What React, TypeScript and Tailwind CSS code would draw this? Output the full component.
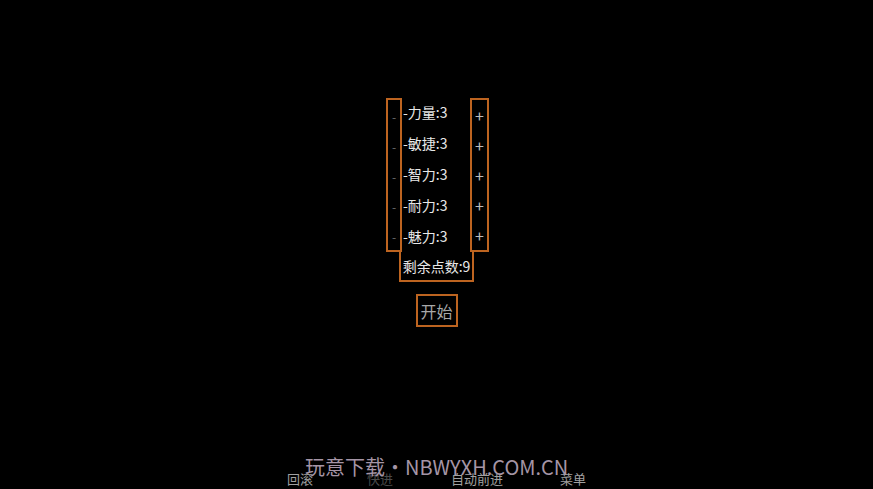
import React from "react";

const stats = ["力量", "敏捷", "智力", "耐力", "魅力"];

export default function App() {
  const font = { fontFamily: '"Noto Sans CJK SC", "Noto Sans", sans-serif' };
  return (
    <div
      className="relative h-[489px] w-[873px] overflow-hidden bg-black flex flex-col items-center"
      style={font}
    >
      {/* attribute panel */}
      <div className="mt-[98px] ml-[2px] w-[103px] flex flex-col">
        <div className="flex h-[154px]">
          <div className="w-[16px] h-full border-2 border-[#bd6420] flex flex-col">
            {stats.map((s) => (
              <div
                key={s}
                className="h-[30px] flex items-center justify-center text-[12px] leading-none text-[#6e6e6e] pt-[3px]"
              >
                -
              </div>
            ))}
          </div>
          <div className="w-[68px] h-full flex flex-col -mt-[1px]">
            {stats.map((s) => (
              <div
                key={s}
                className="h-[31px] flex items-center text-[14px] leading-none text-[#e8e8e8] pl-[1px]"
              >
                -{s}:3
              </div>
            ))}
          </div>
          <div className="w-[19px] h-full border-2 border-[#bd6420] flex flex-col">
            {stats.map((s) => (
              <div
                key={s}
                className="h-[30px] flex items-center justify-center text-[16px] leading-none text-[#bdbdbd]"
              >
                +
              </div>
            ))}
          </div>
        </div>
        <div className="ml-[13px] w-[75px] h-[30px] border-2 border-t-0 border-[#bd6420] flex items-center justify-center text-[14px] leading-none text-[#e8e8e8]">
          剩余点数:9
        </div>
      </div>

      {/* start button */}
      <div className="mt-[12px] w-[42px] h-[33px] border-2 border-[#bd6420] flex items-center justify-center text-[16px] leading-none text-[#a8a8a8]">
        开始
      </div>

      {/* bottom menu */}
      <div className="mt-auto w-full h-[18px] flex text-[13px] leading-[16px] text-[#a0a0a0]">
        <span className="ml-[287px]">回滚</span>
        <span className="ml-[54px] text-[#4a4a4a]">快进</span>
        <span className="ml-[58px]">自动前进</span>
        <span className="ml-[57px]">菜单</span>
      </div>

      {/* watermark overlay */}
      <div className="absolute left-[305px] top-[456px] text-[20px] leading-[22px] text-[#a595a6] whitespace-nowrap">
        玩意下载・NBWYXH.COM.CN
      </div>
    </div>
  );
}
